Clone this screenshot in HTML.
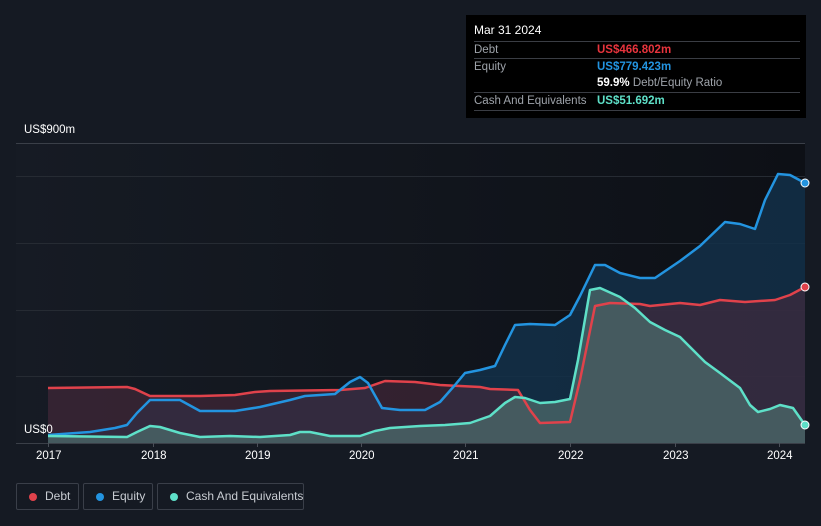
<!DOCTYPE html>
<html><head><meta charset="utf-8"><style>
body{margin:0;width:821px;height:526px;background:#151a23;font-family:"Liberation Sans",sans-serif;overflow:hidden;position:relative}
.tt{position:absolute;left:466px;top:15px;width:340px;height:103px;background:#000;color:#fff;font-size:11.5px}
.tt .r{position:absolute;left:8px;right:6px;border-top:1px solid #3a3d44;height:17px;line-height:17px;white-space:nowrap}
.tt .l{color:#9ea3aa}
.tt .v{position:absolute;left:123px;font-weight:bold}
.lg{position:absolute;top:483px;height:27px;border:1px solid #3a3f49;border-radius:2px;color:#c8ccd2;font-size:12px;line-height:25px;box-sizing:border-box;white-space:nowrap}
.lg i{position:absolute;top:9px;width:8px;height:8px;border-radius:50%}
.ax{position:absolute;color:#fff;font-size:11.5px}
</style></head><body>
<svg width="821" height="526" style="position:absolute;left:0;top:0">
<defs><linearGradient id="bg" x1="0" x2="1"><stop offset="0" stop-color="#161b24"/><stop offset="1" stop-color="#0d1016"/></linearGradient></defs>
<rect x="16" y="143" width="789" height="300" fill="url(#bg)"/>
<g stroke="#262b33" stroke-width="1">
<line x1="16" y1="143.5" x2="805" y2="143.5" stroke="#3a3f48"/>
<line x1="16" y1="176.5" x2="805" y2="176.5"/><line x1="16" y1="243.5" x2="805" y2="243.5"/>
<line x1="16" y1="310.5" x2="805" y2="310.5"/><line x1="16" y1="376.5" x2="805" y2="376.5"/>
<line x1="16" y1="443.5" x2="805" y2="443.5" stroke="#3a3f48"/></g>
<g stroke="#4a4f58"><line x1="48.5" y1="443" x2="48.5" y2="447"/><line x1="153.5" y1="443" x2="153.5" y2="447"/><line x1="257.5" y1="443" x2="257.5" y2="447"/><line x1="361.5" y1="443" x2="361.5" y2="447"/><line x1="465.5" y1="443" x2="465.5" y2="447"/><line x1="570.5" y1="443" x2="570.5" y2="447"/><line x1="675.5" y1="443" x2="675.5" y2="447"/><line x1="779.5" y1="443" x2="779.5" y2="447"/></g>
<path d="M48,435 L90,432 L115,428 L127,425 L137,413 L150,400 L180,400 L200,411 L235,411 L260,407 L290,400 L305,396 L335,394 L350,382 L360,377 L368,383 L382,408 L400,410 L425,410 L440,402 L455,385 L465,373 L480,370 L495,366 L505,345 L515,325 L530,324 L555,325 L570,315 L580,296 L595,265 L605,265 L620,273 L640,278 L655,278 L680,261 L700,246 L725,222 L740,224 L755,229 L765,200 L778,174 L790,175 L805,183 L805,443 L48,443Z" fill="#133049" fill-opacity="0.85"/>
<path d="M48,388 L127,387 L135,389 L150,396 L200,396 L235,395 L255,392 L270,391 L340,390 L365,388 L385,381 L415,382 L440,385 L480,387 L490,389 L518,390 L530,410 L540,423 L570,422 L580,380 L595,306 L610,303 L640,304 L650,306 L680,303 L700,305 L720,300 L745,302 L775,300 L790,295 L805,287 L805,443 L48,443Z" fill="#4a2a3c" fill-opacity="0.6"/>
<path d="M48,436 L127,437 L137,432 L150,426 L160,427 L180,433 L200,437 L230,436 L260,437 L290,435 L300,432 L310,432 L330,436 L360,436 L375,431 L390,428 L420,426 L445,425 L470,423 L490,416 L505,403 L515,397 L525,398 L540,403 L555,402 L570,399 L578,360 L590,290 L600,288 L620,297 L635,308 L650,322 L665,330 L680,337 L690,347 L705,362 L720,373 L740,388 L750,405 L758,412 L770,409 L780,405 L793,408 L805,425 L805,443 L48,443Z" fill="#4a6668" fill-opacity="0.8"/>
<g fill="none" stroke-width="2.5" stroke-linejoin="round">
<path d="M48,388 L127,387 L135,389 L150,396 L200,396 L235,395 L255,392 L270,391 L340,390 L365,388 L385,381 L415,382 L440,385 L480,387 L490,389 L518,390 L530,410 L540,423 L570,422 L580,380 L595,306 L610,303 L640,304 L650,306 L680,303 L700,305 L720,300 L745,302 L775,300 L790,295 L805,287" stroke="#e0424b"/>
<path d="M48,435 L90,432 L115,428 L127,425 L137,413 L150,400 L180,400 L200,411 L235,411 L260,407 L290,400 L305,396 L335,394 L350,382 L360,377 L368,383 L382,408 L400,410 L425,410 L440,402 L455,385 L465,373 L480,370 L495,366 L505,345 L515,325 L530,324 L555,325 L570,315 L580,296 L595,265 L605,265 L620,273 L640,278 L655,278 L680,261 L700,246 L725,222 L740,224 L755,229 L765,200 L778,174 L790,175 L805,183" stroke="#2394e0"/>
<path d="M48,436 L127,437 L137,432 L150,426 L160,427 L180,433 L200,437 L230,436 L260,437 L290,435 L300,432 L310,432 L330,436 L360,436 L375,431 L390,428 L420,426 L445,425 L470,423 L490,416 L505,403 L515,397 L525,398 L540,403 L555,402 L570,399 L578,360 L590,290 L600,288 L620,297 L635,308 L650,322 L665,330 L680,337 L690,347 L705,362 L720,373 L740,388 L750,405 L758,412 L770,409 L780,405 L793,408 L805,425" stroke="#5ee0c8"/>
</g>
<circle cx="805" cy="183" r="4" fill="#2394e0" stroke="#fff" stroke-width="1"/>
<circle cx="805" cy="287" r="4" fill="#e0424b" stroke="#fff" stroke-width="1"/>
<circle cx="805" cy="425" r="4" fill="#5ee0c8" stroke="#fff" stroke-width="1"/>
</svg>
<div class="ax" style="left:24px;top:124px">US$900m</div>
<div class="ax" style="left:24px;top:424px">US$0</div>
<div class="ax" style="left:36px;top:450px">2017</div><div class="ax" style="left:141px;top:450px">2018</div><div class="ax" style="left:245px;top:450px">2019</div><div class="ax" style="left:349px;top:450px">2020</div><div class="ax" style="left:453px;top:450px">2021</div><div class="ax" style="left:558px;top:450px">2022</div><div class="ax" style="left:663px;top:450px">2023</div><div class="ax" style="left:767px;top:450px">2024</div>
<div class="tt">
<div style="position:absolute;left:8px;top:8px;font-size:12px">Mar 31 2024</div>
<div class="r" style="top:26px"><span class="l">Debt</span><span class="v" style="color:#e8343d">US$466.802m</span></div>
<div class="r" style="top:43px"><span class="l">Equity</span><span class="v" style="color:#2394e0">US$779.423m</span></div>
<div class="r" style="top:60px;border-top:none"><span class="v" style="color:#fff">59.9% <span style="color:#9ea3aa;font-weight:normal">Debt/Equity Ratio</span></span></div>
<div class="r" style="top:77px"><span class="l">Cash And Equivalents</span><span class="v" style="color:#5ee0c8">US$51.692m</span></div>
<div style="position:absolute;left:8px;right:6px;top:95px;border-top:1px solid #3a3d44"></div>
</div>
<div class="lg" style="left:16px;width:63px"><i style="left:12px;background:#e0424b"></i><span style="position:absolute;left:28px">Debt</span></div>
<div class="lg" style="left:83px;width:70px"><i style="left:12px;background:#2394e0"></i><span style="position:absolute;left:28px">Equity</span></div>
<div class="lg" style="left:157px;width:147px"><i style="left:12px;background:#5ee0c8"></i><span style="position:absolute;left:28px">Cash And Equivalents</span></div>
</body></html>
